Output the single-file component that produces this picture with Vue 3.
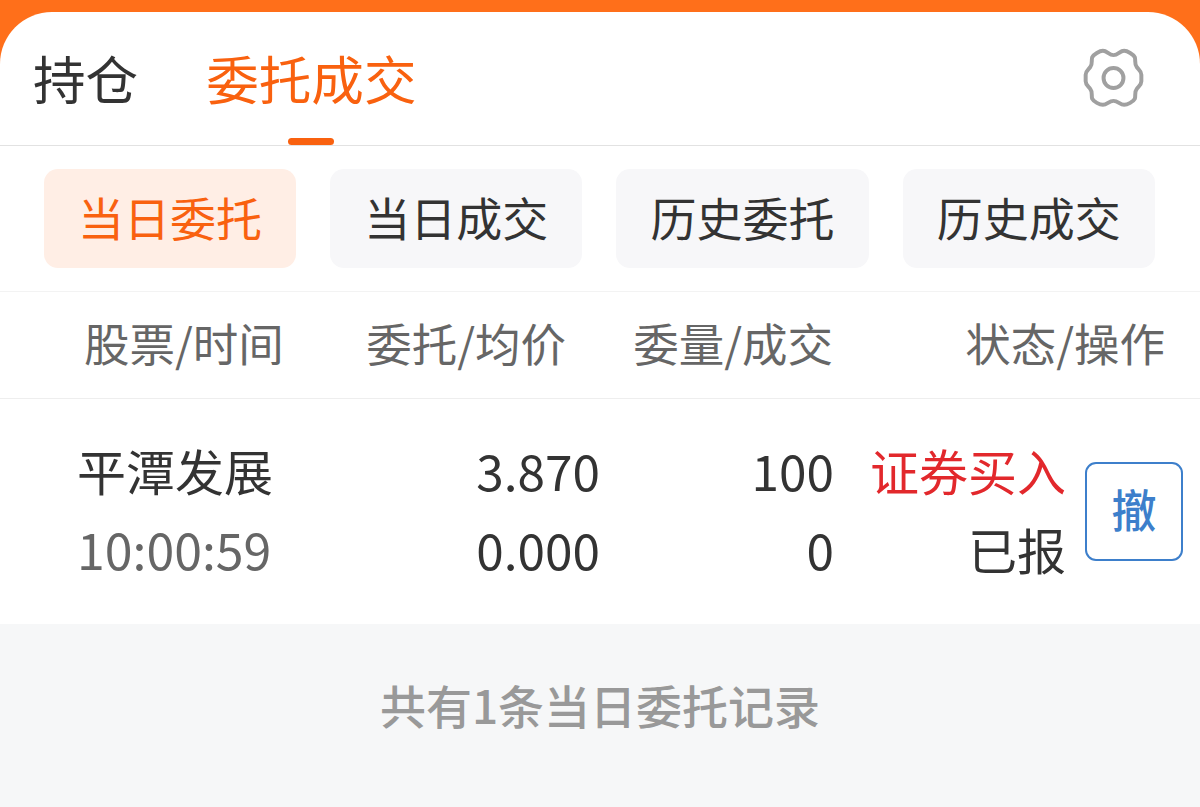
<template>
  <div class="page">
    <div class="card">
      <div class="nav">
        <div class="tab">持仓</div>
        <div class="tab active">委托成交</div>
        <svg class="gear" viewBox="70 55 190 180" width="63" height="60" fill="none" stroke="#a0a0a0" stroke-width="12" stroke-linejoin="round">
          <path d="M130 63C143 63 148 76 162 76C176 76 181 63 194 63C204 63 222 74 226 82C230 92 224 102 232 112C238 120 246 124 246 135L246 155C246 166 238 170 232 178C224 188 230 198 226 208C222 216 204 226 194 226C181 226 176 214 162 214C148 214 143 226 130 226C120 226 102 216 98 208C94 198 100 188 92 178C86 170 78 166 78 155L78 135C78 124 86 120 92 112C100 102 94 92 98 82C102 74 120 63 130 63Z" />
          <circle cx="162" cy="145" r="30" />
        </svg>
      </div>

      <div class="filters">
        <div v-for="(f, i) in filters" :key="f" class="filter" :class="{ on: i === 0 }">{{ f }}</div>
      </div>

      <div class="thead">
        <div class="th-name">股票/时间</div>
        <div class="th">委托/均价</div>
        <div class="th">委量/成交</div>
        <div class="th">状态/操作</div>
      </div>

      <div class="row">
        <div class="c-name">
          <div class="name">平潭发展</div>
          <div class="time">10:00:59</div>
        </div>
        <div class="c-price">
          <div>3.870</div>
          <div>0.000</div>
        </div>
        <div class="c-vol">
          <div>100</div>
          <div>0</div>
        </div>
        <div class="c-status">
          <div class="buy">证券买入</div>
          <div>已报</div>
        </div>
        <div class="cancel">撤</div>
      </div>

      <div class="footer">共有1条当日委托记录</div>
    </div>
  </div>
</template>

<script setup>
const filters = ['当日委托', '当日成交', '历史委托', '历史成交']
</script>

<style>
html, body {
  margin: 0;
  background: #ff6f1a;
}
</style>

<style scoped>
.page {
  height: 807px;
  padding-top: 12px;
  box-sizing: border-box;
  overflow: hidden;
  font-family: "Noto Sans CJK SC", "Noto Sans", sans-serif;
}

.card {
  height: 795px;
  background: #fff;
  border-radius: 52px 52px 0 0;
  display: flex;
  flex-direction: column;
  overflow: hidden;
}

.nav {
  height: 134px;
  flex: none;
  box-sizing: border-box;
  border-bottom: 1px solid #e2e2e2;
  display: flex;
  align-items: center;
  padding: 0 54px 0 33px;
  gap: 68px;
}

.tab {
  position: relative;
  font-size: 52.6px;
  line-height: 130px;
  height: 133px;
  color: #333;
}

.tab.active {
  color: #f9610f;
}

.tab.active::after {
  content: "";
  position: absolute;
  left: 82px;
  bottom: 0;
  width: 46px;
  height: 7px;
  border-radius: 4px;
  background: #f9610f;
}

.gear {
  margin-left: auto;
  margin-top: -1px;
}

.filters {
  height: 146px;
  flex: none;
  box-sizing: border-box;
  border-bottom: 1px solid #f3f3f3;
  padding: 23px 44px 0;
  display: grid;
  grid-template-columns: repeat(4, 252.2px);
  column-gap: 34px;
}

.filter {
  height: 99px;
  box-sizing: border-box;
  padding-bottom: 6px;
  border-radius: 14px;
  background: #f7f7f9;
  color: #333;
  font-size: 46px;
  display: flex;
  align-items: center;
  justify-content: center;
}

.filter.on {
  background: #ffeee5;
  color: #f9610f;
}

.thead {
  height: 107px;
  flex: none;
  box-sizing: border-box;
  border-bottom: 1px solid #eeeeee;
  display: grid;
  grid-template-columns: 282px 200px 267px 332px;
  padding-left: 84px;
  padding-bottom: 6px;
  align-items: center;
  font-size: 45.5px;
  color: #666;
}

.th-name {
  white-space: nowrap;
}

.th {
  text-align: right;
  white-space: nowrap;
}

.row {
  height: 225px;
  flex: none;
  box-sizing: border-box;
  padding: 31px 17px 0 77px;
  display: grid;
  grid-template-columns: 323px 200px 234px 232px 98px;
  font-size: 49px;
  line-height: 79px;
  color: #333;
}

.time {
  color: #666;
  font-size: 50px;
}

.c-price,
.c-vol {
  font-size: 49.5px;
}

.c-price,
.c-vol,
.c-status {
  text-align: right;
}

.buy {
  color: #e2282c;
}

.cancel {
  width: 98px;
  height: 99px;
  margin-top: 32px;
  margin-left: 19px;
  box-sizing: border-box;
  border: 2.5px solid #3d7fcb;
  border-radius: 11px;
  color: #3d7fcb;
  font-size: 45px;
  font-weight: 500;
  line-height: 90px;
  text-align: center;
}

.footer {
  flex: 1;
  background: #f6f7f8;
  color: #999;
  font-size: 46px;
  font-weight: 500;
  text-align: center;
  padding-top: 48px;
  line-height: 64px;
}
</style>
